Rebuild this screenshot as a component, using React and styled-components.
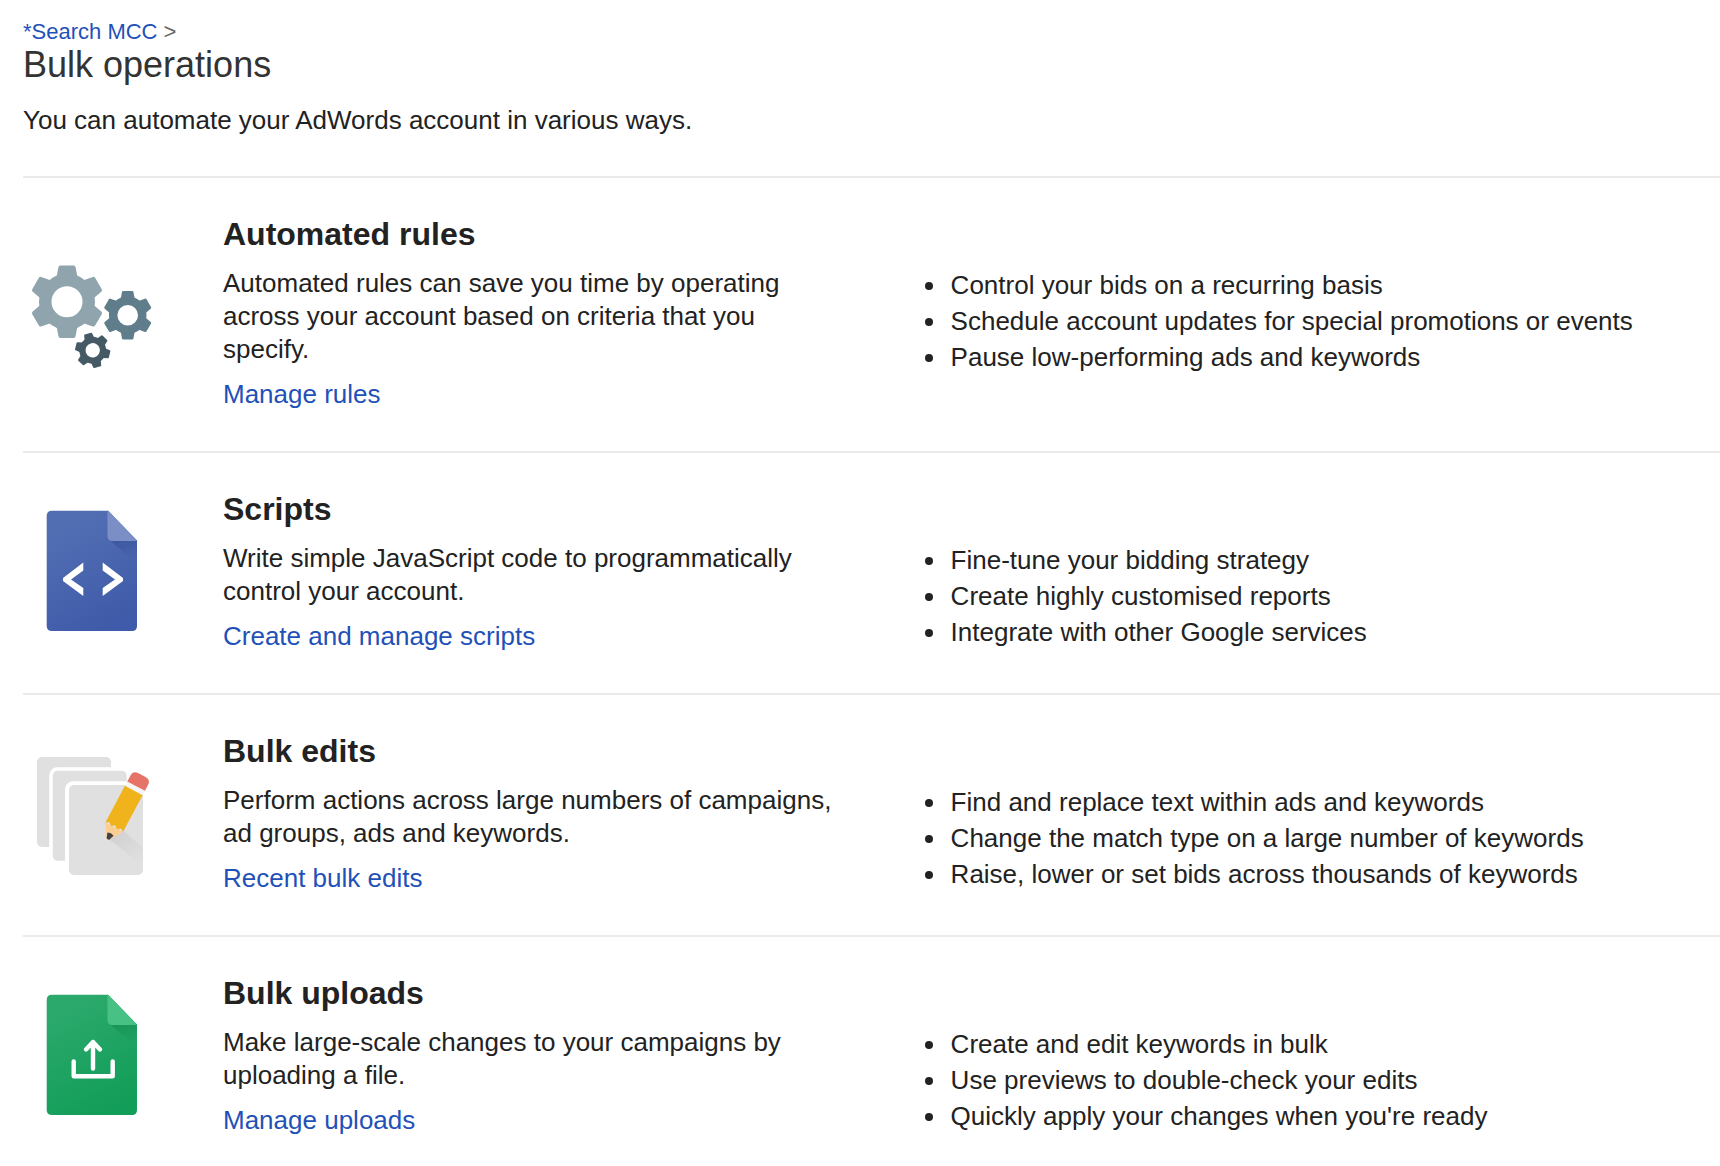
import React from "react";
import styled, { createGlobalStyle } from "styled-components";

const GlobalStyle = createGlobalStyle`
  *, *::before, *::after { box-sizing: border-box; }
  body {
    margin: 0;
    background: #fff;
    color: #222;
    font-family: "Liberation Sans", Arial, Helvetica, sans-serif;
    font-size: 26px;
    line-height: 33px;
  }
`;

const Page = styled.main`
  padding: 19px 0 0 23px;
`;

const Header = styled.header`
  padding-bottom: 39px;
  border-bottom: 2px solid #ebebeb;
`;

const Breadcrumb = styled.nav`
  font-size: 22px;
  line-height: 26px;
  color: #666;
`;

const Link = styled.a`
  color: #1f51b8;
  text-decoration: none;
  &:hover { text-decoration: underline; }
`;

const Title = styled.h1`
  margin: 0 0 19px;
  font-size: 36px;
  font-weight: 400;
  line-height: 40px;
  color: #333;
`;

const Text = styled.p`
  margin: 0;
`;

const Operation = styled.section`
  display: grid;
  grid-template-columns: 200px minmax(0, 23fr) minmax(0, 27fr);
  padding: 38px 0 40px;
  border-bottom: 2px solid #ebebeb;
  &:last-child {
    padding-bottom: 0;
    border-bottom: 0;
  }
`;

const IconCell = styled.div`
  display: flex;
  align-items: center;
`;

const Icon = styled.svg`
  display: block;
  width: 140px;
  height: 140px;
`;

const Summary = styled.div`
  display: flex;
  flex-direction: column;
  align-items: flex-start;
  padding-right: 72px;
`;

const Name = styled.h2`
  margin: 0 0 15px;
  font-size: 32px;
  font-weight: 700;
  line-height: 36px;
`;

const Action = styled(Link)`
  margin-top: 12px;
`;

const Benefits = styled.ul`
  margin: 0;
  padding: 51px 0 0 36px;
  line-height: 36px;
`;

const Benefit = styled.li`
  padding-left: 3px;
`;

function Gear({ x, y, scale, hole, turn = 0, color }) {
  const width = 28 - hole;
  return (
    <g transform={`translate(${x} ${y}) rotate(${turn}) scale(${scale})`}>
      <circle r={hole + width / 2} fill="none" stroke={color} strokeWidth={width} />
      {[0, 60, 120, 180, 240, 300].map((angle) => (
        <path
          key={angle}
          transform={`rotate(${angle})`}
          d="M-8.500 -24L-6.600 -34.300H6.600L8.500 -24Z"
          fill={color}
          stroke={color}
          strokeWidth="4"
          strokeLinejoin="round"
        />
      ))}
    </g>
  );
}

function GearsIcon() {
  return (
    <Icon viewBox="3 -7 140 140" aria-hidden="true">
      <Gear x={47} y={50.7} scale={1} hole={15.5} color="#90a4ae" />
      <Gear x={107.7} y={64.3} scale={0.67} hole={15.4} color="#607d8b" />
      <Gear x={72.7} y={99.3} scale={0.48} hole={15} turn={-16} color="#455a64" />
    </Icon>
  );
}

function FileIcon({ id, from, to, fold, shade, children }) {
  return (
    <Icon viewBox="3 2 140 140" aria-hidden="true">
      <defs>
        <linearGradient id={`${id}-body`} x1="0.2" y1="0" x2="0.6" y2="1">
          <stop offset="0.1" stopColor={from} />
          <stop offset="1" stopColor={to} />
        </linearGradient>
        <linearGradient id={`${id}-shade`} x1="0.3" y1="0" x2="0.6" y2="1">
          <stop offset="0" stopColor={shade} stopOpacity="0.6" />
          <stop offset="0.8" stopColor={shade} stopOpacity="0" />
        </linearGradient>
      </defs>
      <path
        d="M32 10.700H88.300L117 40.500V126Q117 131 112 131H32Q26.700 131 26.700 126V16Q26.700 10.700 32 10.700Z"
        fill={`url(#${id}-body)`}
      />
      <path d="M90 40.500H117V64Z" fill={`url(#${id}-shade)`} />
      <path d="M88 10.700L117 41H92.500Q87.500 41 87.500 36V10.700Z" fill={fold} />
      {children}
    </Icon>
  );
}

function ScriptsIcon() {
  return (
    <FileIcon id="scripts" from="#526eb3" to="#3f5ba9" fold="#7b8fc6" shade="#344d96">
      <path d="M63.300 62.500V70.500L51 79.500L63.300 88V96L43 81V78Z" fill="#fff" />
      <path d="M82.700 62.500V70.500L95 79.500L82.700 88V96L103 81V78Z" fill="#fff" />
    </FileIcon>
  );
}

function UploadsIcon() {
  return (
    <FileIcon id="uploads" from="#2ba96c" to="#129d58" fold="#48c185" shade="#148a4c">
      <path
        d="M53.700 77.500V92.300H92.700V77.500M73 84.500V58M66 65.500L73 58L80 65.500"
        fill="none"
        stroke="#fff"
        strokeWidth="4.400"
        strokeLinecap="round"
        strokeLinejoin="round"
      />
    </FileIcon>
  );
}

function EditsIcon() {
  return (
    <Icon viewBox="3 -1 140 140" aria-hidden="true">
      <defs>
        <linearGradient id="pencil-shadow" x1="0" y1="0" x2="0.8" y2="1">
          <stop offset="0" stopColor="#cfcfcf" />
          <stop offset="1" stopColor="#e0e0e0" />
        </linearGradient>
      </defs>
      <rect x="17" y="12" width="74" height="90" rx="5" fill="#e0e0e0" />
      <rect x="29.300" y="22.300" width="80" height="96" rx="8" fill="#fff" />
      <rect x="32.700" y="25.700" width="74" height="90" rx="5" fill="#e0e0e0" />
      <rect x="45" y="36.300" width="80" height="97" rx="8" fill="#fff" />
      <rect x="49" y="40" width="74" height="90" rx="5" fill="#e0e0e0" />
      <path d="M89 94L104 86L123 103V122Z" fill="url(#pencil-shadow)" />
      <g transform="translate(87.700 94.500) rotate(28)">
        <path d="M-10 -14L10 -14L2 -1Q0 0 -2 -1Z" fill="#fbcf94" />
        <path d="M-3.500 -6L0 -7L3.500 -6L1.500 -0.500Q0 0.500 -1.500 -0.500Z" fill="#424242" />
        <path d="M-10 -56H10V-14L6.500 -16L3.300 -13.500L0 -16L-3.300 -13.500L-6.500 -16L-10 -14Z" fill="#f0b31c" />
        <rect x="-10" y="-61" width="20" height="5.500" fill="#f5f5f5" />
        <path d="M-10 -60.500V-67Q-10 -73 -4 -73H4Q10 -73 10 -67V-60.500Z" fill="#e57368" />
      </g>
    </Icon>
  );
}

const operations = [
  {
    name: "Automated rules",
    icon: GearsIcon,
    text: "Automated rules can save you time by operating across your account based on criteria that you specify.",
    action: "Manage rules",
    benefits: [
      "Control your bids on a recurring basis",
      "Schedule account updates for special promotions or events",
      "Pause low-performing ads and keywords",
    ],
  },
  {
    name: "Scripts",
    icon: ScriptsIcon,
    text: "Write simple JavaScript code to programmatically control your account.",
    action: "Create and manage scripts",
    benefits: [
      "Fine-tune your bidding strategy",
      "Create highly customised reports",
      "Integrate with other Google services",
    ],
  },
  {
    name: "Bulk edits",
    icon: EditsIcon,
    text: "Perform actions across large numbers of campaigns, ad groups, ads and keywords.",
    action: "Recent bulk edits",
    benefits: [
      "Find and replace text within ads and keywords",
      "Change the match type on a large number of keywords",
      "Raise, lower or set bids across thousands of keywords",
    ],
  },
  {
    name: "Bulk uploads",
    icon: UploadsIcon,
    text: "Make large-scale changes to your campaigns by uploading a file.",
    action: "Manage uploads",
    benefits: [
      "Create and edit keywords in bulk",
      "Use previews to double-check your edits",
      "Quickly apply your changes when you're ready",
    ],
  },
];

export default function App() {
  return (
    <>
      <GlobalStyle />
      <Page>
        <Header>
          <Breadcrumb>
            <Link href="#mcc">*Search MCC</Link> &gt;
          </Breadcrumb>
          <Title>Bulk operations</Title>
          <Text>You can automate your AdWords account in various ways.</Text>
        </Header>
        {operations.map(({ name, icon: OperationIcon, text, action, benefits }) => (
          <Operation key={name}>
            <IconCell>
              <OperationIcon />
            </IconCell>
            <Summary>
              <Name>{name}</Name>
              <Text>{text}</Text>
              <Action href="#open">{action}</Action>
            </Summary>
            <Benefits>
              {benefits.map((benefit) => (
                <Benefit key={benefit}>{benefit}</Benefit>
              ))}
            </Benefits>
          </Operation>
        ))}
      </Page>
    </>
  );
}
